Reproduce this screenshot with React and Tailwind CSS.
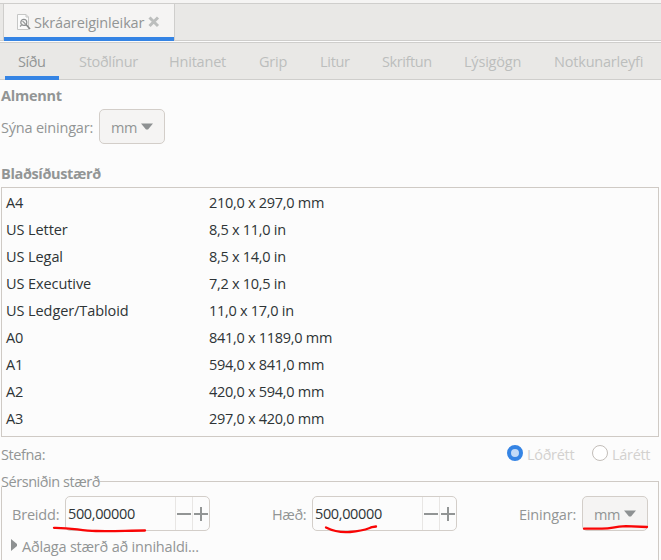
import React from "react";

const pageSizes = [
  ["A4", "210,0 x 297,0 mm"],
  ["US Letter", "8,5 x 11,0 in"],
  ["US Legal", "8,5 x 14,0 in"],
  ["US Executive", "7,2 x 10,5 in"],
  ["US Ledger/Tabloid", "11,0 x 17,0 in"],
  ["A0", "841,0 x 1189,0 mm"],
  ["A1", "594,0 x 841,0 mm"],
  ["A2", "420,0 x 594,0 mm"],
  ["A3", "297,0 x 420,0 mm"],
];

const tabs = [
  ["Stoðlínur", "ml-[20px] w-[90px] tracking-[-0.3px]"],
  ["Hnitanet", "w-[90px] tracking-[-0.2px]"],
  ["Grip", "w-[61px] tracking-[-0.2px]"],
  ["Litur", "w-[62px] tracking-[-0.3px]"],
  ["Skriftun", "w-[82px] tracking-[-0.4px]"],
  ["Lýsigögn", "w-[90px] tracking-[-0.2px]"],
  ["Notkunarleyfi", "w-[100px] tracking-[-0.2px]"],
];

function UnitSelect() {
  return (
    <button className="flex h-[35px] w-[66px] shrink-0 items-center rounded-[5px] border border-[#d3cec9] bg-[#f5f4f3] pl-[11px] text-[#929595]">
      <span className="w-[30px] pt-[2px] text-left tracking-[-0.5px]">mm</span>
      <svg className="h-[7px] w-[12px]" viewBox="0 0 12 7">
        <path d="M0 0.5H12L7 6.5H5Z" fill="#8e9192" />
      </svg>
    </button>
  );
}

function SpinBox() {
  return (
    <div className="flex h-[35px] w-[145px] shrink-0 rounded-[5px] border border-[#d3cec9] bg-[#fcfcfc]">
      <span className="w-[109px] pl-[2px] leading-[33px] tracking-[-0.36px] text-[#2e3436]">500,00000</span>
      <span className="flex w-[17px] items-center justify-center border-l border-[#e8e6e4]">
        <svg className="h-[14px] w-[14px]" viewBox="0 0 14 14">
          <path d="M0 7H14" stroke="#929595" strokeWidth="2" />
        </svg>
      </span>
      <span className="flex w-[17px] items-center justify-center border-l border-[#e8e6e4]">
        <svg className="h-[14px] w-[14px]" viewBox="0 0 14 14">
          <path d="M0 7H14M7 0V14" stroke="#929595" strokeWidth="2" />
        </svg>
      </span>
    </div>
  );
}

export default function App() {
  return (
    <div className="relative h-[560px] w-[661px] overflow-hidden bg-[#fcfcfc] font-['Open_Sans','Noto_Sans',sans-serif] text-[14.5px] leading-[20px] tracking-[-0.2px] whitespace-nowrap text-[#929595]">
      <div className="h-[3px] bg-[#f5f4f3]" />
      <header className="flex h-[38px] border-y border-[#cfcecc] bg-[#e9e8e6] pl-[3px]">
        <div className="mb-[-1px] flex w-[172px] border-x border-[#cfcecc]">
          <div className="flex w-[170px] items-start border-b-4 border-[#3584e4] bg-[#f5f4f3] pl-[13px]">
            <svg className="mt-[10px] h-[17px] w-[14px] shrink-0" viewBox="0 0 14 17" fill="none">
              <path d="M.5 .5H9L11.5 3V15.5H.5Z" fill="#fbfbfb" stroke="#c6c7c6" />
              <path d="M9 .5V3H11.5" stroke="#c6c7c6" />
              <circle cx="6.8" cy="8.4" r="3" stroke="#8e9192" strokeWidth="1.2" />
              <path d="M5.5 7L8.5 10M5.5 10L3 12.5" stroke="#9b9e9e" strokeWidth="1.3" />
              <path d="M9 10.5L13 15" stroke="#858888" strokeWidth="1.6" />
            </svg>
            <span className="mt-[9px] ml-[3px] w-[114px] tracking-[-0.15px]">Skráareiginleikar</span>
            <svg className="mt-[12px] h-[12px] w-[12px] shrink-0" viewBox="0 0 12 12">
              <path d="M1.5 1.5L10 10M10 1.5L1.5 10" stroke="#bcbebd" strokeWidth="3" />
            </svg>
          </div>
        </div>
      </header>
      <nav className="mt-[1px] flex h-[38px] border-y border-[#cfcecc] bg-[#e9e8e6] pl-[5px] text-[#bcbebd]">
        <div className="mb-[-1px] w-[54px] border-b-4 border-[#3584e4] pt-[9px] pl-[13px] tracking-[-0.4px] text-[#929595]">Síðu</div>
        {tabs.map(([name, size]) => (
          <div key={name} className={"shrink-0 pt-[9px] " + size}>{name}</div>
        ))}
      </nav>
      <main className="pl-px">
        <h2 className="mt-[6px] font-bold tracking-[-0.25px]">Almennt</h2>
        <div className="mt-[3px] flex h-[35px]">
          <span className="w-[98px] pt-[9px]">Sýna einingar:</span>
          <UnitSelect />
        </div>
        <h2 className="mt-[20px] font-bold tracking-[-0.35px]">Blaðsíðustærð</h2>
        <div className="mt-[3px] h-[250px] w-[658px] border border-[#cfcac5] pt-[2px]">
          {pageSizes.map(([name, size]) => (
            <div key={name} className="flex h-[27px] pl-[4px] leading-[26px] text-[#2e3436]">
              <span className="w-[203px] tracking-[-0.08px]">{name}</span>
              <span className="tracking-[-0.28px]">{size}</span>
            </div>
          ))}
        </div>
        <div className="flex h-[34px] pt-[8px] text-[#d3d1cf]">
          <span className="w-[506px] text-[#929595] tracking-[-0.4px]">Stefna:</span>
          <span className="h-4 w-4 rounded-full border-4 border-[#3584e4] bg-[#c2daf7]" />
          <span className="ml-[4px] w-[65px] tracking-[-0.3px]">Lóðrétt</span>
          <span className="h-4 w-4 rounded-full border border-[#c3beb9] bg-white" />
          <span className="ml-[4px] tracking-[-0.3px]">Lárétt</span>
        </div>
        <fieldset className="h-[100px] w-[658px]">
          <div className="flex h-[20px]">
            <legend className="h-[20px] w-[99px] pt-px tracking-[-0.45px]">Sérsniðin stærð</legend>
            <span className="mt-[10px] flex-1 border-t border-r border-[#cfcac5]" />
          </div>
          <div className="-mt-[4px] h-[83px] border-x border-[#cfcac5] pt-[9px]">
            <div className="flex h-[35px]">
              <span className="w-[53px] pt-[9px] pl-[10px]">Breidd:</span>
              <span className="ml-[10px] flex">
                <SpinBox />
              </span>
              <span className="ml-[62px] w-[40px] pt-[9px] tracking-[-0.4px]">Hæð:</span>
              <SpinBox />
              <span className="ml-[62px] w-[63px] pt-[9px]">Einingar:</span>
              <UnitSelect />
            </div>
            <div className="mt-[5px] flex pl-[9px]">
              <svg className="mt-[3px] h-[12px] w-[6px]" viewBox="0 0 6 12">
                <path d="M0 0L6 5V7L0 12Z" fill="#8e9192" />
              </svg>
              <span className="mt-[1px] ml-[5px]">Aðlaga stærð að innihaldi...</span>
            </div>
          </div>
        </fieldset>
      </main>
      <svg className="pointer-events-none absolute top-[520px] left-0 h-[20px] w-[661px]" viewBox="0 520 661 20" fill="none" stroke="#f90505" strokeWidth="2.3" strokeLinecap="round" strokeLinejoin="round">
        <path d="M54 527.8C73 527.5 80 531 96 531C114 531.5 128 530.5 145 530.5" />
        <path d="M326 527.5C334 531.5 344 532.5 350 532C364 531 368 528.5 372 527.2L376 526.5" />
        <path d="M584 528.7H602C614 528.5 612 526.5 626 526.2L647 527" />
      </svg>
    </div>
  );
}
